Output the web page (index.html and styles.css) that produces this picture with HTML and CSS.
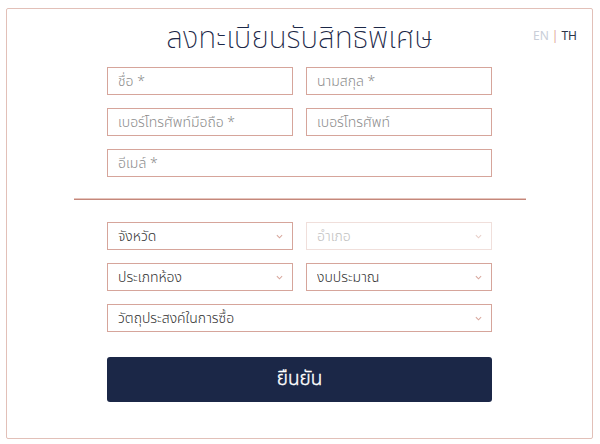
FILE: index.html
```html
<!DOCTYPE html>
<html lang="th">
<head>
    <meta charset="UTF-8">
    <meta name="viewport" content="width=device-width, initial-scale=1.0">
    <title>ลงทะเบียนรับสิทธิพิเศษ</title>
    <link rel="stylesheet" href="styles.css">
</head>
<body>
    <div class="card">
        <div class="header">
            <span></span>
            <h1>ลงทะเบียนรับสิทธิพิเศษ</h1>
            <div class="lang">
                <a href="#" class="lang-en">EN</a><span class="sep">|</span><a href="#" class="lang-th">TH</a>
            </div>
        </div>

        <form class="form" onsubmit="return false;">
            <div class="row">
                <input type="text" placeholder="ชื่อ *">
                <input type="text" placeholder="นามสกุล *">
            </div>
            <div class="row">
                <input type="tel" placeholder="เบอร์โทรศัพท์มือถือ *">
                <input type="tel" placeholder="เบอร์โทรศัพท์">
            </div>
            <div class="row single">
                <input type="email" placeholder="อีเมล์ *">
            </div>
        </form>

        <hr class="divider">

        <form class="form" onsubmit="return false;">
            <div class="row">
                <div class="select">
                    <select><option>จังหวัด</option></select>
                    <svg class="chevron" viewBox="0 0 8 5"><path d="M1 1l3 3 3-3" /></svg>
                </div>
                <div class="select disabled">
                    <select disabled><option>อำเภอ</option></select>
                    <svg class="chevron" viewBox="0 0 8 5"><path d="M1 1l3 3 3-3" /></svg>
                </div>
            </div>
            <div class="row">
                <div class="select">
                    <select><option>ประเภทห้อง</option></select>
                    <svg class="chevron" viewBox="0 0 8 5"><path d="M1 1l3 3 3-3" /></svg>
                </div>
                <div class="select">
                    <select><option>งบประมาณ</option></select>
                    <svg class="chevron" viewBox="0 0 8 5"><path d="M1 1l3 3 3-3" /></svg>
                </div>
            </div>
            <div class="row single">
                <div class="select">
                    <select><option>วัตถุประสงค์ในการซื้อ</option></select>
                    <svg class="chevron" viewBox="0 0 8 5"><path d="M1 1l3 3 3-3" /></svg>
                </div>
            </div>
            <button type="submit" class="btn-submit">ยืนยัน</button>
        </form>
    </div>
</body>
</html>
```

FILE: styles.css
```css
body {
    font-family: 'Noto Sans Thai', 'Noto Sans', 'Open Sans', sans-serif;
    font-weight: 300;
    background-color: #fff;
    margin: 0;
    padding: 8px 7px 5px 6px;
}
.card {
    box-sizing: border-box;
    border: 1px solid #e2c0b8;
    border-radius: 2px;
    height: 431px;
    padding-top: 13px;
}
.header {
    display: grid;
    grid-template-columns: 1fr auto 1fr;
    align-items: center;
}
h1 {
    margin: 0;
    font-size: 29.5px;
    font-weight: 200;
    color: #1b2747;
    line-height: 34px;
}
.lang {
    justify-self: end;
    padding-right: 15px;
    margin-bottom: 7px;
    font-size: 12px;
    font-weight: 400;
}
.lang a {
    text-decoration: none;
}
.lang-en {
    color: #c9ced8;
}
.lang-th {
    color: #2b3448;
}
.sep {
    color: #e0a89c;
    margin: 0 3px;
}
.form {
    width: 385px;
    margin: 0 auto;
    display: flex;
    flex-direction: column;
    gap: 13px;
}
.header + .form {
    margin-top: 11px;
}
.row {
    display: grid;
    grid-template-columns: 1fr 1fr;
    gap: 13px;
}
.row.single {
    grid-template-columns: 1fr;
}
input,
select {
    box-sizing: border-box;
    width: 100%;
    height: 28px;
    border: 1px solid #d6a59b;
    border-radius: 0;
    padding: 0 10px;
    font-family: inherit;
    font-weight: 300;
    font-size: 14px;
    color: #333;
    background: #fff;
    outline: none;
}
input::placeholder {
    color: #8c8c8c;
}
.divider {
    width: 452px;
    margin: 21px auto 22px;
    border: 0;
    border-top: 1px solid #e6c5bd;
    border-bottom: 1px solid #c4877b;
}
.select {
    position: relative;
}
select {
    appearance: none;
    -webkit-appearance: none;
    padding-right: 24px;
}
.select.disabled select {
    color: #a6a6a6;
    border-color: #ebd2cc;
}
.chevron {
    position: absolute;
    right: 10px;
    top: 12px;
    width: 7px;
    height: 5px;
    fill: none;
    stroke: #d8a79d;
    stroke-width: 1.2;
    pointer-events: none;
}
.select.disabled .chevron {
    stroke: #e8cfc9;
}
.btn-submit {
    margin-top: 12px;
    height: 45px;
    border: 0;
    border-radius: 3px;
    background-color: #1b2747;
    color: #fff;
    font-family: inherit;
    font-weight: 350;
    font-size: 19px;
    -webkit-text-stroke: 0.4px #fff;
    cursor: pointer;
}
```
